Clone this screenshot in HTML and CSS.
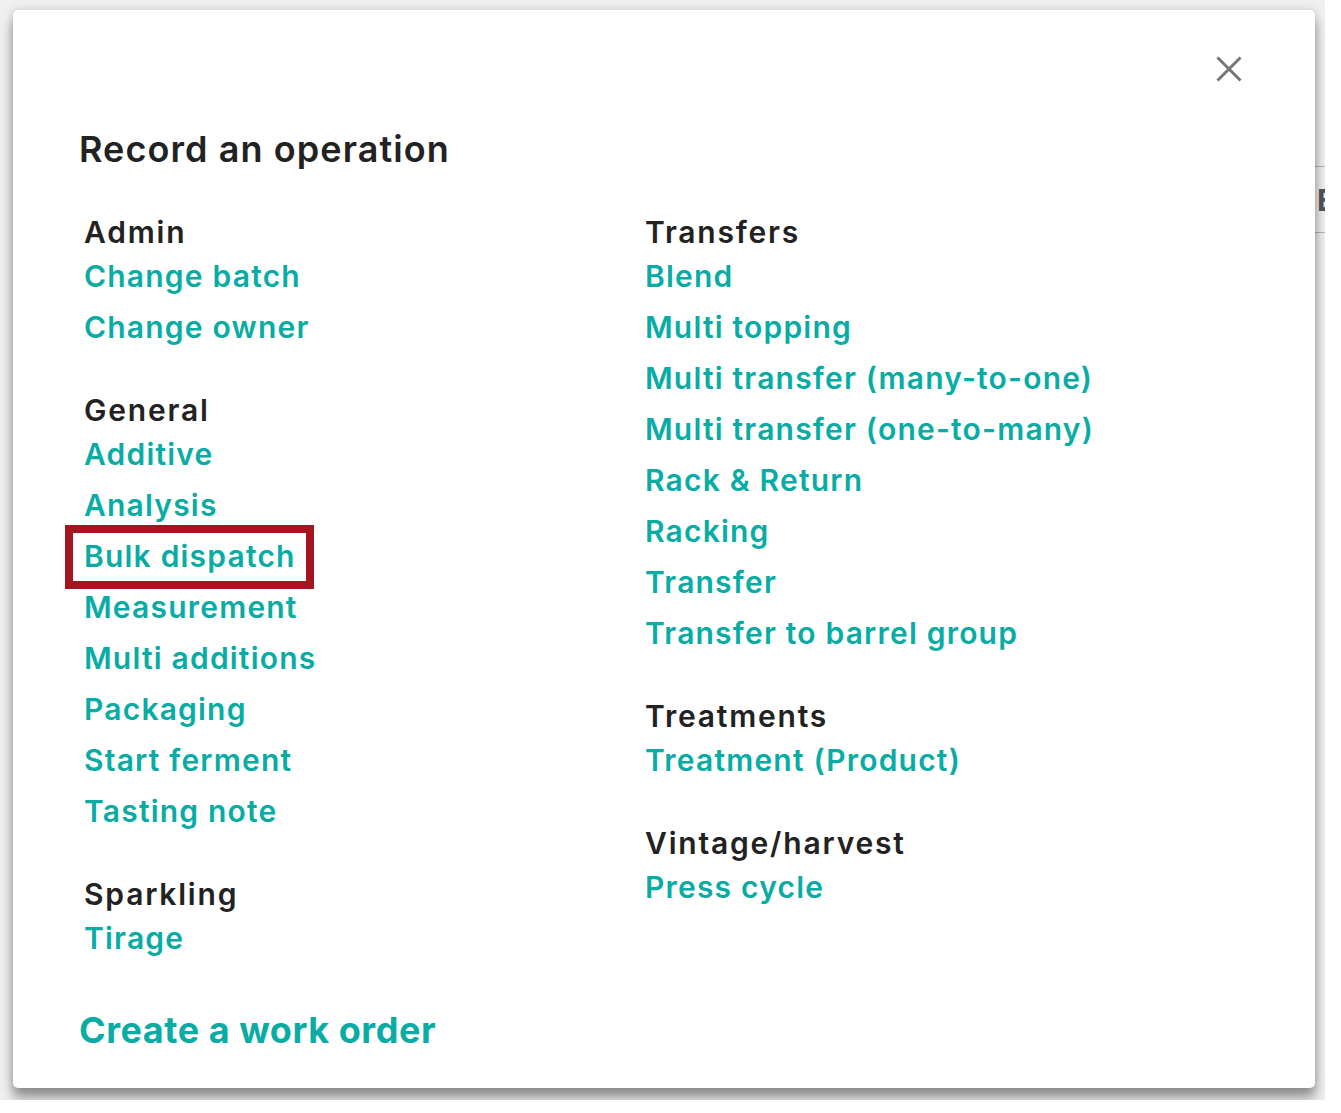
FILE: index.html
```html
<!DOCTYPE html>
<html lang="en">
<head>
<meta charset="utf-8">
<title>Record an operation</title>
<link rel="stylesheet" href="styles.css">
</head>
<body>
<div class="screen">
  <div class="side-tab"><span class="side-tab-label">E</span></div>
  <div class="modal">
    <div class="modal-header">
      <button class="close" type="button" aria-label="Close">
        <svg width="26" height="26" viewBox="0 0 26 26" aria-hidden="true">
          <path d="M1.5 1.5 L24.5 24.5 M24.5 1.5 L1.5 24.5" stroke="#767676" stroke-width="3" fill="none"/>
        </svg>
      </button>
    </div>
    <h1 class="title">Record an operation</h1>
    <div class="columns">
      <div class="col">
        <section class="group">
          <h2 class="group-title">Admin</h2>
          <ul class="links">
            <li><a href="#">Change batch</a></li>
            <li><a href="#">Change owner</a></li>
          </ul>
        </section>
        <section class="group">
          <h2 class="group-title">General</h2>
          <ul class="links">
            <li><a href="#">Additive</a></li>
            <li><a href="#">Analysis</a></li>
            <li><a href="#" class="highlight">Bulk dispatch</a></li>
            <li><a href="#">Measurement</a></li>
            <li><a href="#">Multi additions</a></li>
            <li><a href="#">Packaging</a></li>
            <li><a href="#">Start ferment</a></li>
            <li><a href="#">Tasting note</a></li>
          </ul>
        </section>
        <section class="group">
          <h2 class="group-title">Sparkling</h2>
          <ul class="links">
            <li><a href="#">Tirage</a></li>
          </ul>
        </section>
      </div>
      <div class="col">
        <section class="group">
          <h2 class="group-title">Transfers</h2>
          <ul class="links">
            <li><a href="#">Blend</a></li>
            <li><a href="#">Multi topping</a></li>
            <li><a href="#">Multi transfer (many-to-one)</a></li>
            <li><a href="#">Multi transfer (one-to-many)</a></li>
            <li><a href="#">Rack &amp; Return</a></li>
            <li><a href="#">Racking</a></li>
            <li><a href="#">Transfer</a></li>
            <li><a href="#">Transfer to barrel group</a></li>
          </ul>
        </section>
        <section class="group">
          <h2 class="group-title">Treatments</h2>
          <ul class="links">
            <li><a href="#">Treatment (Product)</a></li>
          </ul>
        </section>
        <section class="group">
          <h2 class="group-title">Vintage/harvest</h2>
          <ul class="links">
            <li><a href="#">Press cycle</a></li>
          </ul>
        </section>
      </div>
    </div>
    <a href="#" class="work-order">Create a work order</a>
  </div>
</div>
</body>
</html>
```

FILE: styles.css
```css
html, body {
  margin: 0;
  padding: 0;
  background: #ffffff;
}

.screen {
  position: relative;
  width: 1325px;
  height: 1100px;
  overflow: hidden;
  box-sizing: border-box;
  padding: 10px 0 0 13px;
  background: #efefef;
  font-family: Inter, "Liberation Sans", sans-serif;
}

.side-tab {
  position: absolute;
  left: 1300px;
  top: 166px;
  width: 60px;
  height: 67px;
  border-top: 1px solid #b4b4b4;
  border-bottom: 1px solid #b4b4b4;
  display: flex;
  align-items: center;
  box-sizing: border-box;
  padding-left: 17px;
}

.side-tab-label {
  font-size: 30px;
  font-weight: 700;
  color: #555555;
  line-height: 1;
}

.modal {
  position: relative;
  z-index: 1;
  width: 1302px;
  height: 1078px;
  box-sizing: border-box;
  background: #ffffff;
  border-radius: 5px;
  box-shadow: 0 10px 12px rgba(0, 0, 0, 0.38), 0 0 10px rgba(0, 0, 0, 0.14);
  padding: 0 66px;
}

.modal-header {
  display: flex;
  justify-content: flex-end;
  padding-top: 46px;
}

.close {
  display: block;
  width: 26px;
  height: 26px;
  margin: 0 7px 0 0;
  padding: 0;
  border: 0;
  background: none;
  cursor: pointer;
}

.close svg {
  display: block;
}

.title {
  margin: 45px 0 0;
  font-size: 36px;
  line-height: 44px;
  font-weight: 600;
  color: #222222;
  letter-spacing: 0.03em;
}

.columns {
  display: grid;
  grid-template-columns: 561px 1fr;
  margin-top: 43px;
  padding-left: 5px;
}

.group + .group {
  margin-top: 39px;
}

.group-title {
  margin: 0;
  font-size: 30px;
  line-height: 37px;
  font-weight: 600;
  color: #222222;
  letter-spacing: 0.06em;
}

.links {
  list-style: none;
  margin: 0;
  padding: 0;
}

.links li {
  line-height: 51px;
  height: 51px;
}

.links a {
  position: relative;
  font-size: 30px;
  font-weight: 600;
  color: #08aca4;
  text-decoration: none;
  letter-spacing: 0.04em;
}

.highlight::after {
  content: "";
  position: absolute;
  left: -19px;
  right: -18px;
  top: -13px;
  bottom: -15px;
  border: 8px solid #a3161f;
  pointer-events: none;
}

.work-order {
  display: block;
  margin-top: 44px;
  font-size: 36px;
  line-height: 44px;
  font-weight: 700;
  color: #08aca4;
  text-decoration: none;
  letter-spacing: 0.015em;
}
```
